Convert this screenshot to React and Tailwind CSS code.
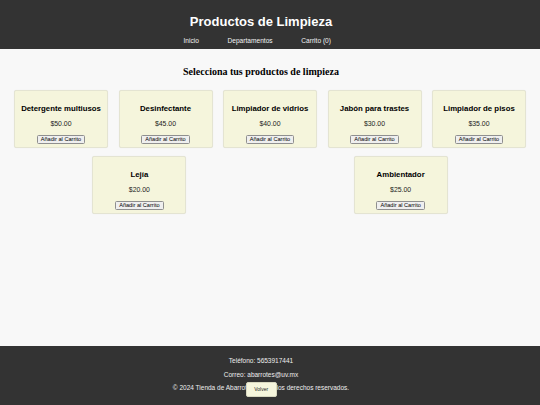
import React from 'react';

const productos = [
    { nombre: 'Detergente multiusos', precio: '$50.00' },
    { nombre: 'Desinfectante', precio: '$45.00' },
    { nombre: 'Limpiador de vidrios', precio: '$40.00' },
    { nombre: 'Jabón para trastes', precio: '$30.00' },
    { nombre: 'Limpiador de pisos', precio: '$35.00' },
    { nombre: 'Lejía', precio: '$20.00' },
    { nombre: 'Ambientador', precio: '$25.00' },
];

function Producto({ nombre, precio }) {
    return (
        <div className="w-[94px] h-[57.5px] flex flex-col items-center pt-[13.5px] bg-[#f5f5dc] border border-[#e4e4d2] rounded-[2px] shadow-[0_0_1px_rgba(0,0,0,0.08)]">
            <h3 className="text-[7.8px] font-bold leading-none text-black whitespace-nowrap">{nombre}</h3>
            <p className="text-[6.9px] leading-none text-[#222] mt-[8.2px]">{precio}</p>
            <button className="mt-[7.5px] h-[9px] px-[3px] flex items-center text-[5.6px] leading-none text-black bg-[#efefef] border border-[#8f8f8f] rounded-[1.5px]">
                Añadir al Carrito
            </button>
        </div>
    );
}

export default function App() {
    return (
        <div className="relative h-[405px] flex flex-col overflow-hidden bg-[#f8f8f8] font-['Liberation_Sans',Arial,sans-serif]">
            {/* Header */}
            <header className="h-[49px] shrink-0 flex flex-col items-center bg-[#333333] text-white pr-[18px]">
                <h1 className="mt-[14.5px] text-[13px] font-bold leading-none">Productos de Limpieza</h1>
                <nav className="mt-[10.5px] flex gap-[28.7px] pr-[7.6px] text-[6.6px] leading-none text-[#f2f2f2]">
                    <a>Inicio</a>
                    <a>Departamentos</a>
                    <a>Carrito (0)</a>
                </nav>
            </header>

            {/* Productos */}
            <main className="flex-1 flex flex-col">
                <h2 className="mt-[18px] pr-[18px] text-center text-[10px] font-bold leading-none text-black font-['Liberation_Serif','Times_New_Roman',serif]">
                    Selecciona tus productos de limpieza
                </h2>
                <div className="mt-[13.4px] px-[8.75px] flex flex-wrap justify-around gap-y-[8.3px]">
                    {productos.map((p) => (
                        <Producto key={p.nombre} {...p} />
                    ))}
                </div>
            </main>

            {/* Footer */}
            <footer className="h-[59px] shrink-0 flex flex-col items-center pt-[12px] gap-[7.2px] bg-[#333333] text-[#eeeeee] text-[6.5px] leading-none pr-[18px]">
                <p>Teléfono: 5653917441</p>
                <p>Correo: abarrotes@uv.mx</p>
                <p>© 2024 Tienda de Abarrotes. Todos los derechos reservados.</p>
            </footer>

            <button className="absolute left-[245.7px] bottom-[8.3px] w-[31px] h-[15px] flex items-center justify-center text-[5px] leading-none text-[#222] bg-[#f5f5dc] rounded-[2px] border border-[#d8d8c0]">
                Volver
            </button>
        </div>
    );
}
